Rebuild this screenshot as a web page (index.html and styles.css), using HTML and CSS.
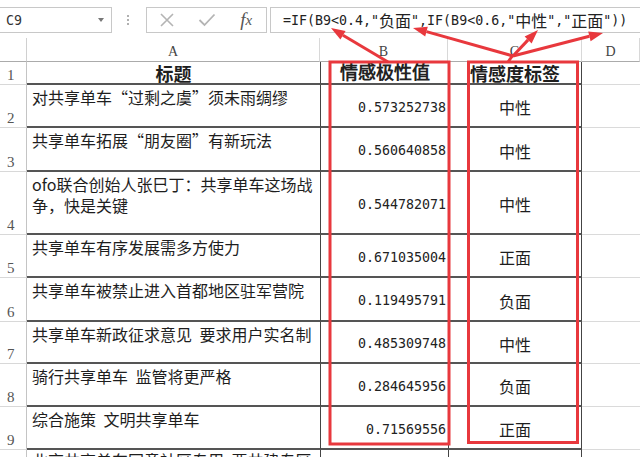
FILE: index.html
```html
<!DOCTYPE html>
<html lang="zh-CN">
<head>
<meta charset="utf-8">
<title>Sheet</title>
<link rel="stylesheet" href="styles.css">
</head>
<body>
<div class="app">
  <div class="fbar">
    <div class="namebox"><span class="mono">C9</span><span class="caret"></span></div>
    <div class="sep"><span class="dots"><i></i><i></i><i></i></span></div>
    <div class="fnbox">
      <div class="fnslot">
        <svg width="16" height="16" viewBox="0 0 16 16"><path d="M2 2 L14 14 M14 2 L2 14" stroke="#b4b4b4" stroke-width="1.6" fill="none"/></svg>
      </div>
      <div class="fnslot">
        <svg width="18" height="14" viewBox="0 0 18 14"><path d="M1.5 7 L6.5 12 L16.5 1.5" stroke="#b4b4b4" stroke-width="1.8" fill="none"/></svg>
      </div>
      <div class="fnslot fx"><span class="fxf">f</span><span class="fxx">x</span></div>
    </div>
    <div class="formula"><span class="mono">=IF(B9&lt;0.4,"</span><span class="cj">负面</span><span class="mono">",IF(B9&lt;0.6,"</span><span class="cj">中性</span><span class="mono">","</span><span class="cj">正面</span><span class="mono">"))</span></div>
  </div>

  <div class="sheet">
    <div class="corner"></div>
    <div class="colh">A</div>
    <div class="colh">B</div>
    <div class="colh">C</div>
    <div class="colh">D</div>

    <div class="rowh">1</div>
    <div class="cell ca head">标题</div>
    <div class="cell cb head">情感极性值</div>
    <div class="cell cc head">情感度标签</div>
    <div class="cell cd"></div>

    <div class="rowh">2</div>
    <div class="cell ca">对共享单车“过剩之虞”须未雨绸缪</div>
    <div class="cell cb">0.573252738</div>
    <div class="cell cc">中性</div>
    <div class="cell cd"></div>

    <div class="rowh">3</div>
    <div class="cell ca">共享单车拓展“朋友圈”有新玩法</div>
    <div class="cell cb">0.560640858</div>
    <div class="cell cc">中性</div>
    <div class="cell cd"></div>

    <div class="rowh">4</div>
    <div class="cell ca"><div class="ln">ofo联合创始人张巳丁：共享单车这场战</div><div class="ln">争，快是关键</div></div>
    <div class="cell cb">0.544782071</div>
    <div class="cell cc">中性</div>
    <div class="cell cd"></div>

    <div class="rowh">5</div>
    <div class="cell ca">共享单车有序发展需多方使力</div>
    <div class="cell cb">0.671035004</div>
    <div class="cell cc">正面</div>
    <div class="cell cd"></div>

    <div class="rowh">6</div>
    <div class="cell ca">共享单车被禁止进入首都地区驻军营院</div>
    <div class="cell cb">0.119495791</div>
    <div class="cell cc">负面</div>
    <div class="cell cd"></div>

    <div class="rowh">7</div>
    <div class="cell ca">共享单车新政征求意见 要求用户实名制</div>
    <div class="cell cb">0.485309748</div>
    <div class="cell cc">中性</div>
    <div class="cell cd"></div>

    <div class="rowh">8</div>
    <div class="cell ca">骑行共享单车 监管将更严格</div>
    <div class="cell cb">0.284645956</div>
    <div class="cell cc">负面</div>
    <div class="cell cd"></div>

    <div class="rowh">9</div>
    <div class="cell ca">综合施策 文明共享单车</div>
    <div class="cell cb">0.71569556</div>
    <div class="cell cc">正面</div>
    <div class="cell cd"></div>

    <div class="rowh">10</div>
    <div class="cell ca last">北京共享单车同意社区专用 要共建专区</div>
    <div class="cell cb"></div>
    <div class="cell cc"></div>
    <div class="cell cd"></div>
  </div>

  <svg class="annot" width="640" height="457" viewBox="0 0 640 457">
    <g fill="none" stroke="#e8383d" stroke-width="3">
      <rect x="330" y="62" width="119" height="382"/>
      <rect x="468.5" y="62" width="109" height="380.5"/>
      <line x1="388" y1="62" x2="343" y2="35.2"/>
      <line x1="513" y1="56" x2="426.5" y2="31.6"/>
      <line x1="513" y1="56" x2="528.1" y2="39.9"/>
      <line x1="513" y1="56" x2="589.4" y2="36.3"/>
      <line x1="508" y1="62" x2="513" y2="55"/>
    </g>
    <g fill="#e8383d">
      <polygon points="331,28 345.6,30.9 340.4,39.5"/>
      <polygon points="413,28 427.8,26.8 425.2,36.5"/>
      <polygon points="538,30 531.6,43.4 524.6,36.4"/>
      <polygon points="603,33 590.6,41.2 588.2,31.4"/>
    </g>
  </svg>
</div>
</body>
</html>
```

FILE: styles.css
```css
html, body {
  margin: 0;
  padding: 0;
  background: #ffffff;
}
body {
  width: 640px;
  height: 457px;
  overflow: hidden;
  font-family: "Noto Sans CJK SC", "Noto Sans", sans-serif;
  color: #1e1e1e;
}
.app {
  position: relative;
  width: 640px;
  height: 457px;
  overflow: hidden;
}

/* formula bar */
.fbar {
  display: flex;
  height: 38px;
  padding-top: 7px;
  box-sizing: border-box;
}
.mono {
  font-family: "DejaVu Sans Mono", "Liberation Mono", monospace;
  font-size: 13.3px;
}
.namebox {
  width: 113px;
  height: 26px;
  margin-left: -1px;
  box-sizing: border-box;
  border: 1px solid #c8c8c8;
  display: flex;
  align-items: center;
  justify-content: space-between;
  padding: 0 7px 0 6px;
  color: #333;
}
.caret {
  width: 0;
  height: 0;
  border-left: 3px solid transparent;
  border-right: 3px solid transparent;
  border-top: 4px solid #777;
}
.sep {
  width: 34px;
  display: flex;
  justify-content: center;
  align-items: center;
  height: 26px;
}
.dots {
  display: flex;
  flex-direction: column;
  gap: 2px;
  margin-left: -2px;
}
.dots i {
  display: block;
  width: 2px;
  height: 2px;
  background: #b0b0b0;
}
.fnbox {
  width: 121px;
  height: 26px;
  box-sizing: border-box;
  border: 1px solid #c8c8c8;
  display: flex;
  align-items: center;
}
.fnslot {
  width: 40px;
  display: flex;
  justify-content: center;
  align-items: center;
}
.fx {
  font-family: "Liberation Serif", "DejaVu Serif", serif;
  font-style: italic;
  color: #555;
  font-size: 19px;
  line-height: 20px;
}
.fxx {
  font-size: 15px;
}
.formula {
  flex: 1;
  margin-left: 3px;
  margin-right: -2px;
  height: 26px;
  box-sizing: border-box;
  border: 1px solid #c8c8c8;
  display: flex;
  align-items: center;
  padding-left: 12px;
  color: #222;
  white-space: nowrap;
}
.cj {
  font-size: 16px;
  line-height: 20px;
}

/* sheet */
.sheet {
  display: grid;
  grid-template-columns: 27px 293px 128px 134px 1fr;
  grid-template-rows: 24px 23px 43px 44px 63px 43px 44px 42px 43px 43px 43px;
}
.corner {
  border-right: 1px solid #d0d0d0;
  border-bottom: 1px solid #ababab;
}
.colh {
  border-right: 1px solid #d8d8d8;
  border-bottom: 1px solid #ababab;
  display: flex;
  justify-content: center;
  align-items: center;
  padding-top: 4px;
  font-family: "Liberation Serif", "DejaVu Serif", serif;
  font-size: 14px;
  color: #444;
}
.rowh {
  border-right: 1px solid #c4c4c4;
  border-bottom: 1px solid #d8d8d8;
  display: flex;
  align-items: flex-end;
  padding-left: 7px;
  padding-bottom: 1px;
  font-family: "Liberation Serif", "DejaVu Serif", serif;
  font-size: 15px;
  line-height: 16px;
  color: #555;
}
.cell {
  box-sizing: border-box;
  border-bottom: 2px solid #555;
  font-size: 16px;
  overflow: hidden;
  white-space: nowrap;
}
.ca {
  padding: 2px 0 0 5px;
  line-height: 21px;
  word-spacing: 4px;
}
.ln {
  height: 21px;
}
.ca.last {
  padding-top: 0;
}
.cb {
  border-left: 1px solid #444;
  display: flex;
  justify-content: flex-end;
  align-items: center;
  padding: 3px 2px 0 0;
  font-family: "DejaVu Sans Mono", "Liberation Mono", monospace;
  font-size: 13.3px;
  color: #222;
}
.cc {
  border-left: 1px solid #444;
  border-right: 1px solid #444;
  display: flex;
  justify-content: center;
  align-items: center;
  padding-top: 3px;
}
.cd {
  border-bottom: 1px solid #dadada;
}
.head {
  font-weight: bold;
  font-size: 18px;
  display: flex;
  justify-content: center;
  align-items: center;
  line-height: 18px;
  padding: 1px 0 0 0;
  overflow: visible;
}
.ca.head {
  padding: 1px 0 0 0;
}

.annot {
  position: absolute;
  left: 0;
  top: 0;
  pointer-events: none;
}
```
